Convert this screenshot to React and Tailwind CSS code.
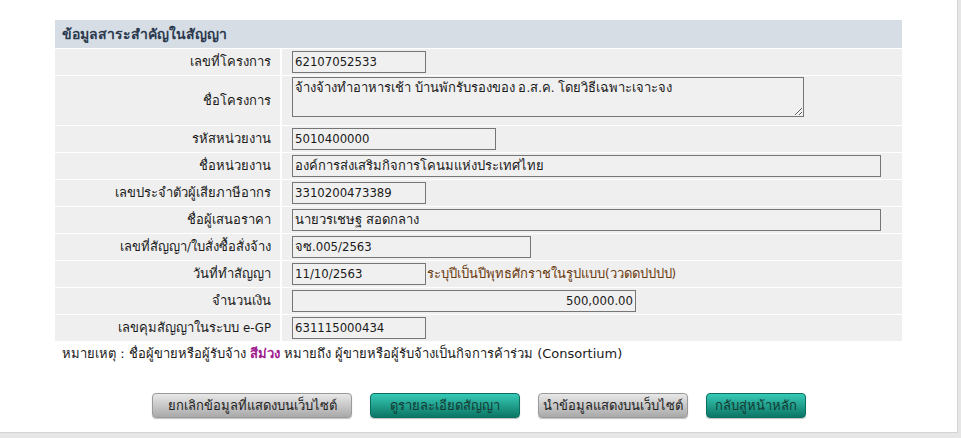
import React from "react";

const F = { fontFamily: 'Tahoma, "DejaVu Sans Condensed", "DejaVu Sans", "Noto Sans", sans-serif' };

function Row({ label, children, tall }) {
  return (
    <div className={`grid grid-cols-[225px_620px] gap-x-[2px] border-t border-white ${tall ? "h-[50px]" : "h-[27px]"}`}>
      <div className="bg-[#efefef] flex items-center justify-end pr-[9px]">
        <span>{label}</span>
      </div>
      <div className="bg-[#efefef] flex items-center pl-[10px]">{children}</div>
    </div>
  );
}

function Box({ w, value, right }) {
  return (
    <div
      className={`h-[22px] border border-[#767676] bg-[#f0f0f0] flex items-center px-[2px] ${right ? "justify-end" : ""}`}
      style={{ width: w }}
    >
      <span className="whitespace-nowrap">{value}</span>
    </div>
  );
}

export default function App() {
  return (
    <div className="w-[961px] h-[438px] bg-[#e6e6e6] overflow-hidden text-[13px] text-[#1a1a1a]" style={F}>
      <div className="w-[958px] h-[433px] bg-white border-r border-b border-[#d4d4d4] pt-[20px] pl-[55px]">
        <div className="w-[847px]">
          <div className="h-[28px] bg-[#d6dde5] flex items-center pl-[7px] font-bold text-[14px] text-[#2b3a4e]">
            ข้อมูลสาระสำคัญในสัญญา
          </div>
          <Row label="เลขที่โครงการ">
            <Box w={134} value="62107052533" />
          </Row>
          <Row label="ชื่อโครงการ" tall>
            <textarea
              readOnly
              className="w-[512px] h-[40px] border border-[#767676] bg-[#f0f0f0] px-[2px] py-[1px] leading-[17px] outline-none mb-[7px] resize"
              defaultValue="จ้างจ้างทำอาหารเช้า บ้านพักรับรองของ อ.ส.ค. โดยวิธีเฉพาะเจาะจง"
            />
          </Row>
          <Row label="รหัสหน่วยงาน">
            <Box w={204} value="5010400000" />
          </Row>
          <Row label="ชื่อหน่วยงาน">
            <Box w={589} value="องค์การส่งเสริมกิจการโคนมแห่งประเทศไทย" />
          </Row>
          <Row label="เลขประจำตัวผู้เสียภาษีอากร">
            <Box w={134} value="3310200473389" />
          </Row>
          <Row label="ชื่อผู้เสนอราคา">
            <Box w={589} value="นายวรเชษฐ สอดกลาง" />
          </Row>
          <Row label="เลขที่สัญญา/ใบสั่งซื้อสั่งจ้าง">
            <Box w={239} value="จซ.005/2563" />
          </Row>
          <Row label="วันที่ทำสัญญา">
            <Box w={134} value="11/10/2563" />
            <span className="text-[#6b3a0e] pl-[1px]">ระบุปีเป็นปีพุทธศักราชในรูปแบบ(ววดดปปปป)</span>
          </Row>
          <Row label="จำนวนเงิน">
            <Box w={344} value="500,000.00" right />
          </Row>
          <Row label="เลขคุมสัญญาในระบบ e-GP">
            <Box w={134} value="631115000434" />
          </Row>
        </div>
        <div className="pl-[7px] pt-[4px] h-[22px] flex items-center font-['DejaVu_Sans',sans-serif]">
          หมายเหตุ : ชื่อผู้ขายหรือผู้รับจ้าง&nbsp;<b className="text-[#a0208e]">สีม่วง</b>&nbsp;หมายถึง ผู้ขายหรือผู้รับจ้างเป็นกิจการค้าร่วม (Consortium)
        </div>
        <div className="flex pl-[97px] pt-[30px] gap-x-[18px]">
          <button className="w-[200px] h-[25px] rounded-[4px] bg-gradient-to-b from-[#e8e8e8] to-[#a9a9a9] border border-[#9a9a9a] text-[#222] shadow-[0_1px_1px_rgba(0,0,0,0.25)]">
            ยกเลิกข้อมูลที่แสดงบนเว็บไซต์
          </button>
          <button className="w-[150px] h-[25px] rounded-[4px] bg-gradient-to-b from-[#36cbb7] to-[#0b7765] border border-[#0c6f60] text-[#133a33] shadow-[0_1px_1px_rgba(0,0,0,0.25)]">
            ดูรายละเอียดสัญญา
          </button>
          <button className="w-[150px] h-[25px] rounded-[4px] bg-gradient-to-b from-[#e8e8e8] to-[#a9a9a9] border border-[#9a9a9a] text-[#222] shadow-[0_1px_1px_rgba(0,0,0,0.25)]">
            นำข้อมูลแสดงบนเว็บไซต์
          </button>
          <button className="w-[100px] h-[25px] rounded-[4px] bg-gradient-to-b from-[#36cbb7] to-[#0b7765] border border-[#0c6f60] text-[#133a33] shadow-[0_1px_1px_rgba(0,0,0,0.25)]">
            กลับสู่หน้าหลัก
          </button>
        </div>
      </div>
    </div>
  );
}
